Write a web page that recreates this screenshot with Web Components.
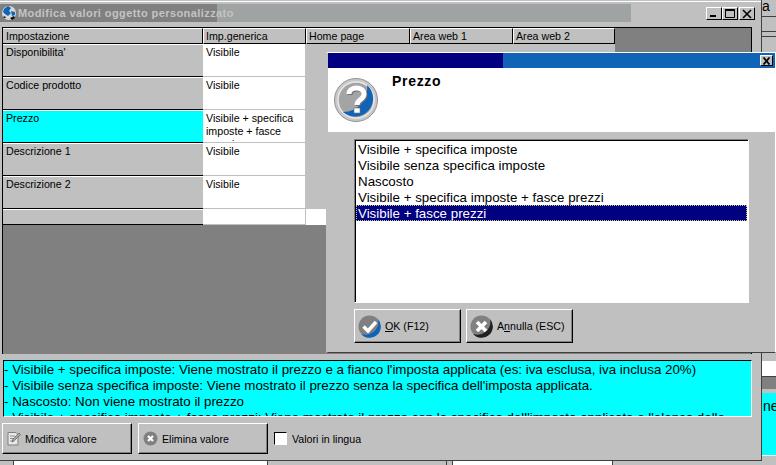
<!DOCTYPE html>
<html>
<head>
<meta charset="utf-8">
<title>Modifica valori oggetto personalizzato</title>
<style>
  html, body { margin: 0; padding: 0; height: 100%; overflow: hidden; background: #c0c0c0; }
</style>
</head>
<body>
<legacy-desktop>
  <main-window title="Modifica valori oggetto personalizzato">
    <value-grid>
      <grid-cell kind="head">Impostazione</grid-cell>
      <grid-cell kind="head">Imp.generica</grid-cell>
      <grid-cell kind="head">Home page</grid-cell>
      <grid-cell kind="head">Area web 1</grid-cell>
      <grid-cell kind="head">Area web 2</grid-cell>
      <grid-cell kind="dark"></grid-cell>

      <grid-cell kind="label">Disponibilita'</grid-cell>
      <grid-cell kind="value">Visibile</grid-cell>
      <grid-cell kind="rest"></grid-cell>
      <grid-cell kind="dark"></grid-cell>

      <grid-cell kind="label">Codice prodotto</grid-cell>
      <grid-cell kind="value">Visibile</grid-cell>
      <grid-cell kind="rest"></grid-cell>
      <grid-cell kind="dark"></grid-cell>

      <grid-cell kind="current">Prezzo</grid-cell>
      <grid-cell kind="value">Visibile + specifica imposte + fasce prezzi</grid-cell>
      <grid-cell kind="rest"></grid-cell>
      <grid-cell kind="dark"></grid-cell>

      <grid-cell kind="label">Descrizione 1</grid-cell>
      <grid-cell kind="value">Visibile</grid-cell>
      <grid-cell kind="rest"></grid-cell>
      <grid-cell kind="dark"></grid-cell>

      <grid-cell kind="label">Descrizione 2</grid-cell>
      <grid-cell kind="value">Visibile</grid-cell>
      <grid-cell kind="rest"></grid-cell>
      <grid-cell kind="dark"></grid-cell>

      <grid-cell kind="blank"></grid-cell>
      <grid-cell kind="value"></grid-cell>
      <grid-cell kind="tail"></grid-cell>
    </value-grid>

    <help-box>
      <div>- Visibile + specifica imposte: Viene mostrato il prezzo e a fianco l'imposta applicata (es: iva esclusa, iva inclusa 20%)</div>
      <div>- Visibile senza specifica imposte: Viene mostrato il prezzo senza la specifica dell'imposta applicata.</div>
      <div>- Nascosto: Non viene mostrato il prezzo</div>
      <div>- Visibile + specifica imposte + fasce prezzi: Viene mostrato il prezzo con la specifica dell'imposta applicata e l'elenco delle</div>
    </help-box>

    <action-bar>
      <win-button size="small">
        <svg slot="icon" width="14" height="15" viewBox="0 0 14 15">
          <path d="M1 1.5h8l2 2v10.5H1z" fill="#e8e8e8" stroke="#808080"/>
          <path d="M3 5h5M3 7.5h4M3 10h4" stroke="#909090"/>
          <path d="M5 11l1-3 6-6 1.5 1.5-6 6z" fill="#a8a8a8" stroke="#606060" stroke-width=".7"/>
        </svg>
        Modifica valore
      </win-button>
      <win-button size="small">
        <svg slot="icon" width="15" height="15" viewBox="0 0 15 15">
          <circle cx="7.5" cy="7.5" r="7" fill="#808080"/>
          <path d="M2 11a7 7 0 0 0 12 -1a7 7 0 0 1 -12 1z" fill="#404040"/>
          <path d="M5 5l5 5M10 5l-5 5" stroke="#fff" stroke-width="2.2"/>
        </svg>
        Elimina valore
      </win-button>
      <check-field>Valori in lingua</check-field>
    </action-bar>
  </main-window>

  <choice-dialog heading="Prezzo">
    <choice-list>
      <div>Visibile + specifica imposte</div>
      <div>Visibile senza specifica imposte</div>
      <div>Nascosto</div>
      <div>Visibile + specifica imposte + fasce prezzi</div>
      <div class="selected">Visibile + fasce prezzi</div>
    </choice-list>
    <win-button slot="actions" size="large">
      <svg slot="icon" width="23" height="23" viewBox="0 0 23 23">
        <circle cx="11.5" cy="11.5" r="11" fill="#808080"/>
        <path d="M20 4a11 11 0 0 1 -17 15a13 13 0 0 0 17 -15z" fill="#1064b8"/>
        <path d="M5.5 11.5l4.5 4.5 8-9" fill="none" stroke="#fff" stroke-width="3.4"/>
      </svg>
      <span><u>O</u>K (F12)</span>
    </win-button>
    <win-button slot="actions" size="large">
      <svg slot="icon" width="23" height="23" viewBox="0 0 23 23">
        <circle cx="11.5" cy="11.5" r="11" fill="#808080"/>
        <path d="M20 4a11 11 0 0 1 -17 15a13 13 0 0 0 17 -15z" fill="#202020"/>
        <path d="M7 7l9 9M16 7l-9 9" stroke="#fff" stroke-width="3.6"/>
      </svg>
      <span>A<u>n</u>nulla (ESC)</span>
    </win-button>
  </choice-dialog>
</legacy-desktop>

<script>
const desktopTemplate = document.createElement('template');
desktopTemplate.innerHTML = `
  <style>
    :host { display: block; position: relative; width: 776px; height: 465px; overflow: hidden; background: #c0c0c0;
      font-family: "Liberation Sans", Arial, sans-serif; color: #000; }
    .side { position: absolute; left: 762px; top: 0; width: 14px; height: 465px; display: flex; flex-direction: column; overflow: hidden; font-size: 14px; }
    .side div { flex: none; }
    .a { height: 16px; line-height: 12px; }
    .line { height: 1px; background: #404040; }
    .gap14 { height: 14px; }
    .gap4 { height: 4px; }
    .skip { height: 324px; }
    .white { height: 15px; background: #fff; }
    .dark { height: 12px; background: #808080; }
    .cyan { height: 62px; background: #0ff; padding: 5px 0 0 1px; box-sizing: border-box; }
    .foot { position: absolute; left: 0; top: 461px; width: 776px; height: 4px; display: flex; }
    .foot span { display: block; height: 4px; flex: none; }
  </style>
  <slot></slot>
  <div class="side">
    <div class="a">a</div>
    <div class="line"></div>
    <div class="gap14"></div>
    <div class="line"></div>
    <div class="gap4"></div>
    <div class="line"></div>
    <div class="skip"></div>
    <div class="white"></div>
    <div class="line"></div>
    <div class="dark"></div>
    <div class="gap4"></div>
    <div class="cyan">ne</div>
    <div style="height:1px;background:#fff"></div>
  </div>
  <div class="foot">
    <span style="width:13px"></span><span style="width:1px;background:#404040"></span>
    <span style="width:253px;background:#fff"></span><span style="width:1px;background:#404040"></span>
    <span style="width:178px"></span><span style="width:1px;background:#404040"></span>
    <span style="width:5px"></span><span style="width:1px;background:#404040"></span>
    <span style="width:159px;background:#fff"></span><span style="width:1px;background:#404040"></span>
  </div>
`;
class LegacyDesktop extends HTMLElement {
  constructor() {
    super();
    this.attachShadow({ mode: 'open' });
    this.shadowRoot.appendChild(desktopTemplate.content.cloneNode(true));
  }
}

const windowTemplate = document.createElement('template');
windowTemplate.innerHTML = `
  <style>
    :host { display: flex; flex-direction: column; position: absolute; left: 0; top: 0; z-index: 1; width: 761px; height: 460px;
      border-right: 1px solid #404040; border-bottom: 1px solid #404040;
      background: linear-gradient(#c0c0c0 1px, #fff 1px, #fff 2px, #c0c0c0 2px); }
    .bar { display: flex; height: 18px; margin-top: 4px; position: relative; flex: none; }
    .shade { width: 217px; background: #808080; }
    .fade { width: 414px; background: #9fa3a3; }
    .icon { position: absolute; left: 1px; top: 0; }
    .text { position: absolute; left: 18px; top: 2px; font: bold 11px "Liberation Sans", Arial, sans-serif; letter-spacing: .42px; color: #c4c4c4; white-space: nowrap; line-height: 14px; }
    .buttons { position: absolute; left: 706px; top: 3px; display: flex; }
    .buttons button { width: 16px; height: 13px; padding: 0; border: 1px solid; border-color: #fff #000 #000 #fff; background: #c0c0c0; display: flex; align-items: center; justify-content: center; }
    .buttons button:nth-child(3) { margin-left: 1px; }
  </style>
  <div class="bar">
    <div class="shade"></div><div class="fade"></div>
    <svg class="icon" width="16" height="18" viewBox="0 0 16 18">
      <circle cx="8" cy="9" r="7" fill="#d8d8d8"/>
      <path d="M3 5l4-3 3 2-2 3 2 2-3 3-3-2-2-2z" fill="#1064b8"/>
      <path d="M10 7l4 1 0 3-3 1z" fill="#1064b8"/>
      <path d="M9 14l4-2 1 2-3 2z" fill="#101010"/>
      <path d="M2 13l2-1 1 2-2 0z" fill="#303030"/>
    </svg>
    <div class="text"></div>
    <div class="buttons">
      <button><svg width="10" height="9" viewBox="0 0 10 9"><path d="M1 6h6v2H1z" fill="#000"/></svg></button>
      <button><svg width="12" height="11" viewBox="0 0 12 11"><path d="M1.5 1.5h9v8h-9z" fill="none" stroke="#000"/><path d="M1 1h10v2H1z"/></svg></button>
      <button><svg width="12" height="10" viewBox="0 0 12 10"><path d="M2 1l8 8M10 1l-8 8" stroke="#000" stroke-width="1.6"/></svg></button>
    </div>
  </div>
  <slot></slot>
`;
class MainWindow extends HTMLElement {
  constructor() {
    super();
    this.attachShadow({ mode: 'open' });
    this.shadowRoot.appendChild(windowTemplate.content.cloneNode(true));
    this.shadowRoot.querySelector('.text').textContent = this.getAttribute('title');
    this.removeAttribute('title');
  }
}

const gridTemplate = document.createElement('template');
gridTemplate.innerHTML = `
  <style>
    :host { display: grid; flex: none; box-sizing: border-box; width: 750px; height: 327px; margin: 5px 0 0 2px;
      border-top: 1px solid #000; border-left: 1px solid #000; border-right: 1px solid #000;
      grid-template-columns: 200px 103px 104px 103px 102px 136px;
      grid-template-rows: 16px repeat(5, 33px) 16px 1fr;
      background: #808080; overflow: hidden; }
  </style>
  <slot></slot>
`;
class ValueGrid extends HTMLElement {
  constructor() {
    super();
    this.attachShadow({ mode: 'open' });
    this.shadowRoot.appendChild(gridTemplate.content.cloneNode(true));
  }
}

const cellTemplate = document.createElement('template');
cellTemplate.innerHTML = `
  <style>
    :host { display: block; box-sizing: border-box; overflow: hidden; font-size: 10.67px; line-height: 13px; padding: 1px 3px 0; background: #c0c0c0; }
    :host([kind="head"]) { border-top: 1px solid #fff; border-left: 1px solid #fff; border-right: 1px solid #000; border-bottom: 1px solid #000; padding: 0 0 0 2px; line-height: 14px; }
    :host([kind="head"]:first-child) { border-left: 0; padding-left: 3px; }
    :host([kind="dark"]) { background: #808080; padding: 0; }
    :host([kind="label"]), :host([kind="current"]), :host([kind="blank"]) { border-top: 1px solid #fff; border-bottom: 1px solid #000; }
    :host([kind="current"]) { background: #0ff; }
    :host([kind="value"]) { background: #fff; border-right: 1px solid #c0c0c0; border-bottom: 1px solid #c0c0c0; padding: 2px 2px 0 3px; }
    :host([kind="rest"]) { grid-column: 3 / 6; padding: 0; }
    :host([kind="tail"]) { grid-column: 3 / 7; background: #fff; padding: 0; }
  </style>
  <slot></slot>
`;
class GridCell extends HTMLElement {
  constructor() {
    super();
    this.attachShadow({ mode: 'open' });
    this.shadowRoot.appendChild(cellTemplate.content.cloneNode(true));
  }
}

const helpTemplate = document.createElement('template');
helpTemplate.innerHTML = `
  <style>
    :host { display: block; flex: none; box-sizing: border-box; width: 749px; height: 57px; margin: 6px 0 0 3px; overflow: hidden; padding-top: 1px;
      border: 1px solid; border-color: #000 #fff #fff #000; background: #0ff; font-size: 13.33px; line-height: 16px; }
  </style>
  <slot></slot>
`;
class HelpBox extends HTMLElement {
  constructor() {
    super();
    this.attachShadow({ mode: 'open' });
    this.shadowRoot.appendChild(helpTemplate.content.cloneNode(true));
  }
}

const barTemplate = document.createElement('template');
barTemplate.innerHTML = `
  <style>
    :host { display: flex; flex: none; align-items: center; gap: 6px; margin: 6px 0 0 2px; height: 31px; }
  </style>
  <slot></slot>
`;
class ActionBar extends HTMLElement {
  constructor() {
    super();
    this.attachShadow({ mode: 'open' });
    this.shadowRoot.appendChild(barTemplate.content.cloneNode(true));
  }
}

const buttonTemplate = document.createElement('template');
buttonTemplate.innerHTML = `
  <style>
    :host { display: inline-flex; flex: none; box-sizing: border-box; align-items: center; border: 1px solid; border-color: #fff #000 #000 #fff;
      box-shadow: inset -1px -1px 0 #808080; background: #c0c0c0; font-size: 10.67px; white-space: nowrap; }
    :host([size="small"]) { width: 130px; height: 31px; padding-left: 4px; gap: 4px; }
    :host([size="large"]) { width: 107px; height: 34px; padding-left: 3px; gap: 4px; }
    ::slotted(svg) { flex: none; }
  </style>
  <slot name="icon"></slot><slot></slot>
`;
class WinButton extends HTMLElement {
  constructor() {
    super();
    this.attachShadow({ mode: 'open' });
    this.shadowRoot.appendChild(buttonTemplate.content.cloneNode(true));
  }
}

const checkTemplate = document.createElement('template');
checkTemplate.innerHTML = `
  <style>
    :host { display: inline-flex; align-items: center; gap: 5px; font-size: 10.67px; }
    .box { width: 11px; height: 11px; background: #fff; border: 1px solid; border-color: #000 #fff #fff #000; }
  </style>
  <div class="box"></div><slot></slot>
`;
class CheckField extends HTMLElement {
  constructor() {
    super();
    this.attachShadow({ mode: 'open' });
    this.shadowRoot.appendChild(checkTemplate.content.cloneNode(true));
  }
}

const dialogTemplate = document.createElement('template');
dialogTemplate.innerHTML = `
  <style>
    :host { display: flex; flex-direction: column; position: absolute; left: 326px; top: 52px; z-index: 2; box-sizing: border-box; width: 450px; height: 301px;
      border-top: 1px solid #fff; border-left: 2px solid #c0c0c0; border-right: 1px solid #fff; border-bottom: 1px solid #404040; background: #c0c0c0; }
    .bar { display: flex; height: 15px; flex: none; background: #1064b8; position: relative; }
    .bar i { display: block; width: 175px; background: #000080; }
    .close { position: absolute; right: 2px; top: 2px; box-sizing: border-box; width: 13px; height: 11px; border: 1px solid; border-color: #fff #000 #000 #fff; background: #c0c0c0; display: flex; align-items: center; justify-content: center; }
    .top { display: flex; height: 64px; flex: none; background: #fff; }
    .top svg { margin: 9px 0 0 6px; flex: none; }
    .top b { font-size: 14px; line-height: 16px; margin: 5px 0 0 14px; letter-spacing: .7px; }
    .body { display: flex; flex-direction: column; gap: 6px; padding: 7px 0 0 26px; }
    .actions { display: flex; gap: 5px; }
  </style>
  <div class="bar"><i></i>
    <div class="close"><svg width="9" height="8" viewBox="0 0 9 8"><path d="M1.5 .5l6 7M7.5 .5l-6 7" stroke="#000" stroke-width="1.8"/></svg></div>
  </div>
  <div class="top">
    <svg width="44" height="45" viewBox="0 0 44 45">
      <circle cx="22" cy="23" r="21.5" fill="#c8c8c8" stroke="#909090"/>
      <circle cx="22" cy="23" r="18" fill="#a4a4a4" stroke="#e8e8e8" stroke-width="1.5"/>
      <path d="M33 8a18 18 0 0 1 -24 27a24 24 0 0 0 24 -27z" fill="#1064b8"/>
      <path d="M15 17c0-8 15-8 15 0c0 6-7 5-7 11" fill="none" stroke="#707070" stroke-width="5" transform="translate(1 1)"/>
      <path d="M15 17c0-8 15-8 15 0c0 6-7 5-7 11" fill="none" stroke="#fff" stroke-width="5"/>
      <rect x="20" y="31" width="6" height="5" fill="#fff" stroke="#707070" stroke-width=".6"/>
    </svg>
    <b></b>
  </div>
  <div class="body">
    <slot></slot>
    <div class="actions"><slot name="actions"></slot></div>
  </div>
`;
class ChoiceDialog extends HTMLElement {
  constructor() {
    super();
    this.attachShadow({ mode: 'open' });
    this.shadowRoot.appendChild(dialogTemplate.content.cloneNode(true));
    this.shadowRoot.querySelector('b').textContent = this.getAttribute('heading');
  }
}

const listTemplate = document.createElement('template');
listTemplate.innerHTML = `
  <style>
    :host { display: block; box-sizing: border-box; width: 395px; height: 164px; background: #fff; padding: 1px;
      border: 1px solid; border-color: #808080 #fff #fff #808080; box-shadow: inset 1px 1px 0 #000; font-size: 13.33px; line-height: 16px; }
    ::slotted(div) { height: 16px; line-height: 17px; padding-left: 2px; white-space: nowrap; }
    ::slotted(.selected) { background: #000080; color: #fff; outline: 1px dotted #c8c878; outline-offset: -1px; }
  </style>
  <slot></slot>
`;
class ChoiceList extends HTMLElement {
  constructor() {
    super();
    this.attachShadow({ mode: 'open' });
    this.shadowRoot.appendChild(listTemplate.content.cloneNode(true));
  }
}

customElements.define('legacy-desktop', LegacyDesktop);
customElements.define('main-window', MainWindow);
customElements.define('value-grid', ValueGrid);
customElements.define('grid-cell', GridCell);
customElements.define('help-box', HelpBox);
customElements.define('action-bar', ActionBar);
customElements.define('win-button', WinButton);
customElements.define('check-field', CheckField);
customElements.define('choice-dialog', ChoiceDialog);
customElements.define('choice-list', ChoiceList);
</script>
</body>
</html>
